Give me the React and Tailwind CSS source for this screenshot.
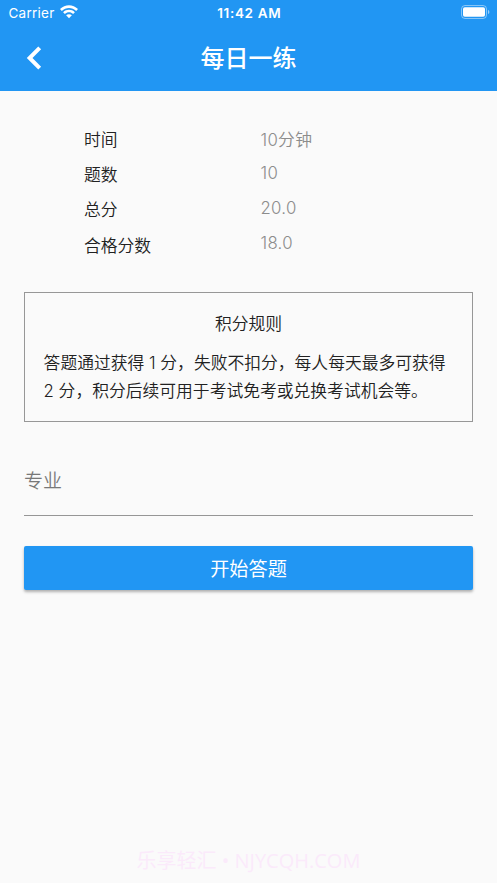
const rows = [
  { label: '时间', value: '10分钟', valueClass: 'mt-0' },
  { label: '题数', value: '10', valueClass: '-mt-[5px]' },
  { label: '总分', value: '20.0', valueClass: '-mt-[5px]' },
  { label: '合格分数', value: '18.0', valueClass: '-mt-[5px]' },
];

function Header() {
  return (
    <header className="h-[91.3px] shrink-0 bg-[#2196f3] text-white">
      <div className="grid h-[26px] grid-cols-3 items-center pl-[8.5px] pr-[7px] text-[13px]">
        <div className="flex items-center gap-[5px]">
          <span className="pt-px text-[13.5px] tracking-[0.25px]">Carrier</span>
          <svg className="-mt-[2px]" width="18" height="14" viewBox="0 0 18 14" fill="currentColor">
            <path d="M0 4.1C5-1 13-1 18 4.1L16.2 5.9C12.2 2 5.8 2 1.8 5.9Z" />
            <path d="M3.1 7.2c3.3-3.2 8.5-3.2 11.8 0L13.1 9C10.8 6.8 7.2 6.8 4.9 9Z" />
            <path d="M6.1 10.3c1.6-1.5 4.2-1.5 5.8 0L9 13.2Z" />
          </svg>
        </div>
        <div className="whitespace-nowrap pt-px text-center text-[13.5px] font-semibold tracking-[0.65px]">11:42 AM</div>
        <svg className="-mt-[2px] justify-self-end" width="29" height="14" viewBox="0 0 29 14">
          <rect x=".5" y=".5" width="25" height="13" rx="3.5" fill="none" stroke="white" strokeOpacity=".45" />
          <rect x="2" y="2.3" width="22" height="9.4" rx="1.8" fill="white" />
          <path d="M27 5c1.8.5 1.8 3.5 0 4Z" fill="white" fillOpacity=".55" />
        </svg>
      </div>
      <div className="grid h-[65px] grid-cols-[64px_1fr_64px] items-center">
        <svg className="-mt-[2px] ml-[26px]" width="16" height="24" viewBox="0 0 16 24" fill="none" stroke="white" strokeWidth="4">
          <path d="M13.7 1.8 3.6 12l10.1 10.2" />
        </svg>
        <h1 className="text-center text-2xl font-medium">每日一练</h1>
      </div>
    </header>
  );
}

export default function App() {
  return (
    <div className="flex h-[883px] w-[497px] flex-col overflow-hidden bg-[#fafafa] font-[Inter,'Noto_Sans_CJK_SC',sans-serif] text-[#212121]">
      <Header />
      <main className="flex-1 px-6 pt-[31.7px]">
        <dl className="pl-[60px]">
          {rows.map((r) => (
            <div key={r.label} className="grid h-[35.2px] grid-cols-[176.5px_1fr] items-center text-[16.8px]">
              <dt className="font-[350]">{r.label}</dt>
              <dd className={`font-[350] tracking-[0.3px] text-[#8c8c8c] ${r.valueClass}`}>{r.value}</dd>
            </div>
          ))}
        </dl>
        <section className="mt-[28.4px] h-[130px] border-[1.5px] border-[#979797] px-[18.6px] pt-[17px] text-[16.8px] font-[350]">
          <h2 className="text-center leading-[28px]">积分规则</h2>
          <p className="mt-[12px] whitespace-nowrap leading-[27.6px]">
            答题通过获得 1 分，失败不扣分，每人每天最多可获得<br />
            2 分，积分后续可用于考试免考或兑换考试机会等。
          </p>
        </section>
        <div className="mt-[44px] flex h-[50px] items-start border-b border-[#969696] text-[19px] font-[350] leading-[32px] text-[#787878]">专业</div>
        <button className="mt-[30px] block h-[44px] w-full rounded-[2px] bg-[#2196f3] pt-[3px] text-[19.2px] text-white shadow-[0_2px_3px_rgba(0,0,0,0.3)]">
          开始答题
        </button>
      </main>
      <footer className="h-[44px] text-center font-['Open_Sans','Noto_Sans_CJK_SC',sans-serif] text-[20px] leading-[44px] text-[#faeafa]">乐享轻汇 • NJYCQH.COM</footer>
    </div>
  );
}
